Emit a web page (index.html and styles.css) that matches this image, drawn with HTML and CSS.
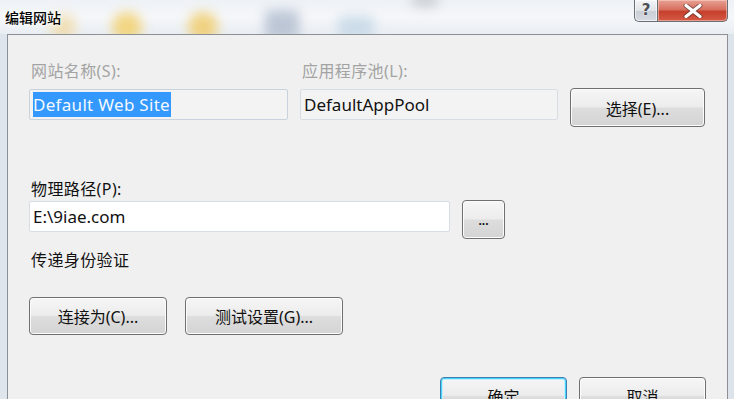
FILE: index.html
```html
<!DOCTYPE html>
<html lang="zh-CN">
<head>
<meta charset="utf-8">
<title>编辑网站</title>
<link rel="stylesheet" href="styles.css">
</head>
<body>
<div class="window">
  <div class="titlebar">
    <div class="glass">
      <span class="blob b1"></span><span class="blob b2"></span><span class="blob b3"></span><span class="blob b4"></span><span class="blob b5"></span><span class="blob b6"></span>
    </div>
    <div class="title">编辑网站</div>
    <div class="controls">
      <div class="ctl help"><span>?</span></div>
      <div class="ctl close">
        <svg width="22" height="14" viewBox="0 0 22 14"><path d="M4 1.5 L18 12.5 M18 1.5 L4 12.5" stroke="#3a2a2a" stroke-width="5" stroke-linecap="round" opacity="0.55"/><path d="M4 1.5 L18 12.5 M18 1.5 L4 12.5" stroke="#ffffff" stroke-width="3.2" stroke-linecap="round"/></svg>
      </div>
    </div>
  </div>
  <div class="panel">
    <div class="site-grid">
      <div class="label disabled">网站名称(S):</div>
      <div class="label disabled">应用程序池(L):</div>
      <div></div>
      <div class="input readonly focus"><span class="selected">Default Web Site</span></div>
      <div class="input readonly">DefaultAppPool</div>
      <button class="btn select-btn">选择(E)...</button>
    </div>
    <div class="label path-label">物理路径(P):</div>
    <div class="path-row">
      <div class="input path-input">E:\9iae.com</div>
      <button class="btn dots-btn">...</button>
    </div>
    <div class="label auth-label">传递身份验证</div>
    <div class="conn-row">
      <button class="btn conn-btn">连接为(C)...</button>
      <button class="btn test-btn">测试设置(G)...</button>
    </div>
    <div class="ok-row">
      <button class="btn ok-btn default">确定</button>
      <button class="btn cancel-btn">取消</button>
    </div>
  </div>
</div>
</body>
</html>
```

FILE: styles.css
```css
* { box-sizing: border-box; }
html, body { margin: 0; padding: 0; }
body {
  font-family: "Noto Sans", "Noto Sans CJK SC", sans-serif;
  font-size: 16px;
  color: #111;
  background: #e4e9ef;
}
.window {
  width: 734px;
  height: 399px;
  overflow: hidden;
  background: linear-gradient(90deg, #dfe5ec 0%, #eef2f6 30%, #e9eef3 70%, #dde3ea 100%);
}
.titlebar {
  height: 34px;
  display: flex;
  align-items: flex-start;
  position: relative;
}
.glass {
  position: absolute;
  inset: 0;
  overflow: hidden;
  background: linear-gradient(180deg, #eef2f6 0%, #f5f7fa 50%, #e9eef3 100%);
}
.blob {
  position: absolute;
  border-radius: 50%;
  filter: blur(6px);
}
.b1 { left: 50px; top: 14px; width: 26px; height: 26px; background: #f2d28a; opacity: 0.6; }
.b2 { left: 112px; top: 12px; width: 30px; height: 30px; background: #f4cc5c; opacity: 0.75; }
.b3 { left: 188px; top: 12px; width: 30px; height: 30px; background: #f1c75a; opacity: 0.75; }
.b4 { left: 265px; top: 10px; width: 34px; height: 30px; background: #a8b4c8; opacity: 0.7; border-radius: 4px; }
.b5 { left: 338px; top: 16px; width: 36px; height: 22px; background: #b4cde0; opacity: 0.6; border-radius: 4px; }
.b6 { left: 410px; top: -8px; width: 30px; height: 16px; background: #9aa0a8; opacity: 0.4; }
.title {
  position: relative;
  margin: 8px 0 0 5px;
  font-family: "Noto Sans CJK SC", sans-serif;
  font-size: 14px;
  font-weight: 500;
  line-height: 18px;
  color: #000;
  text-shadow: 0 0 6px #fff, 0 0 3px #fff;
}
.controls {
  position: relative;
  margin-left: auto;
  margin-right: 6px;
  display: flex;
  height: 22px;
}
.ctl {
  height: 22px;
  border: 1px solid #6b6e74;
  border-top: none;
  display: flex;
  align-items: center;
  justify-content: center;
}
.help {
  width: 23px;
  border-radius: 0 0 0 5px;
  border-right: none;
  background: linear-gradient(180deg, #f3f4f6 0%, #dfe2e7 50%, #c9ced6 51%, #d6dbe2 100%);
  box-shadow: inset 0 0 0 1px rgba(255,255,255,0.6);
}
.help span {
  font-family: "DejaVu Sans", sans-serif;
  font-weight: bold;
  font-size: 15px;
  color: #4b4f56;
  text-shadow: 0 0 2px #fff;
  line-height: 1;
}
.close {
  width: 71px;
  border-radius: 0 0 5px 0;
  background: linear-gradient(180deg, #e8a296 0%, #d8705f 45%, #c6402c 55%, #d55a45 100%);
  box-shadow: inset 0 0 0 1px rgba(255,220,210,0.5);
}
.panel {
  margin: 0 6px 0 7px;
  height: 365px;
  border: 1px solid #8c9094;
  border-bottom: none;
  background: #f0f0f0;
  padding: 26px 21px 0 21px;
}
.label {
  font-size: 16px;
  line-height: 20px;
  height: 20px;
  padding-left: 2px;
  letter-spacing: 0.4px;
  white-space: nowrap;
}
.disabled { color: #a3a3a3; }
.site-grid {
  display: grid;
  grid-template-columns: 259px 258px 135px;
  grid-template-rows: 20px 31px;
  column-gap: 12px;
  row-gap: 8px;
}
.input {
  height: 31px;
  border: 1px solid #d5dae1;
  border-top-color: #c3c8cf;
  border-radius: 2px;
  background: #fff;
  padding: 0 0 0 3px;
  display: flex;
  align-items: center;
  font-size: 17px;
  white-space: nowrap;
}
.readonly {
  background: #f3f3f3;
  border-color: #d8dde3;
}
.focus { border-color: #c8d3de; }
.selected {
  background: #3399ff;
  color: #f4f8ff;
  line-height: 25px;
  padding-right: 1px;
  letter-spacing: 0.3px;
}
.btn {
  font-family: "Noto Sans", "Noto Sans CJK SC", sans-serif;
  font-size: 16px;
  color: #111;
  border: 1px solid #707070;
  border-radius: 4px;
  background: linear-gradient(180deg, #f6f6f6 0%, #ececec 48%, #dddddd 52%, #d4d4d4 100%);
  box-shadow: inset 0 0 0 1px #fcfcfc;
  padding: 0;
  margin: 0;
  cursor: default;
}
.select-btn {
  height: 39px;
  margin-top: -1px;
  align-self: start;
}
.path-label {
  margin-top: 59px;
}
.path-row {
  display: flex;
  gap: 12px;
  margin-top: 2px;
  height: 38px;
}
.path-input {
  width: 421px;
  border-color: #d8dde3;
}
.dots-btn {
  width: 43px;
  height: 39px;
  margin-top: -1px;
  font-size: 12px;
  font-weight: bold;
  padding-top: 2px;
}
.auth-label {
  margin-top: 11px;
}
.conn-row {
  display: flex;
  gap: 18px;
  margin-top: 27px;
}
.conn-btn { width: 138px; height: 38px; }
.test-btn { width: 158px; height: 38px; }
.ok-row {
  display: flex;
  justify-content: flex-end;
  gap: 12px;
  margin-top: 42px;
}
.ok-btn, .cancel-btn {
  width: 127px;
  height: 38px;
}
.default {
  border-color: #3c7fb1;
  box-shadow: inset 0 0 0 1px #48d3fb, inset 0 0 0 2px #c6eefc;
}
```
